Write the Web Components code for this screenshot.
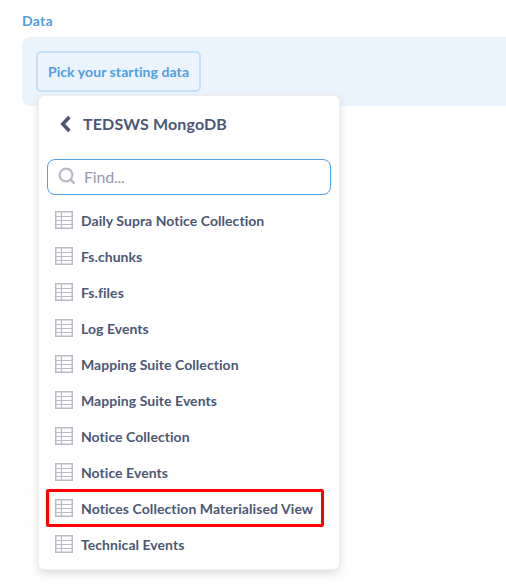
<!DOCTYPE html>
<html lang="en">
<head>
<meta charset="utf-8">
<title>Pick your starting data</title>
<style>
html, body { margin: 0; height: 100%; overflow: hidden; background: #fff; font-family: Lato, "Liberation Sans", sans-serif; font-variant-ligatures: none; color: #4c5773; }
</style>
</head>
<body>
<data-step label="Data">
  <pick-button>Pick your starting data</pick-button>
  <table-picker slot="popover" heading="TEDSWS MongoDB">
    <search-field slot="search" placeholder="Find..."></search-field>
    <table-item>Daily Supra Notice Collection</table-item>
    <table-item>Fs.chunks</table-item>
    <table-item>Fs.files</table-item>
    <table-item>Log Events</table-item>
    <table-item>Mapping Suite Collection</table-item>
    <table-item>Mapping Suite Events</table-item>
    <table-item>Notice Collection</table-item>
    <table-item>Notice Events</table-item>
    <table-item marked>Notices Collection Materialised View</table-item>
    <table-item>Technical Events</table-item>
  </table-picker>
</data-step>
<script>
function define(name, render) {
  customElements.define(name, class extends HTMLElement {
    constructor() {
      super();
      this.attachShadow({ mode: 'open' });
    }
    connectedCallback() {
      this.shadowRoot.innerHTML = '<style>*{box-sizing:border-box}</style>' + render(this);
    }
  });
}

define('data-step', el => `
  <style>
    :host { display: block; position: relative; padding: 12px 0 0 22px; }
    .label { font-size: 14px; line-height: 17px; font-weight: 700; color: #509ee3; margin-bottom: 8px; letter-spacing: .25px; }
    .panel { display: flex; height: 69px; padding: 14px; background: #ebf4fc; border-radius: 8px 0 0 8px; }
    .popover { position: absolute; left: 38px; top: 95px; }
  </style>
  <div class="label">${el.getAttribute('label')}</div>
  <div class="panel"><slot></slot></div>
  <div class="popover"><slot name="popover"></slot></div>`);

define('pick-button', () => `
  <style>
    :host { display: flex; align-items: center; justify-content: center; box-sizing: border-box; width: 165px; height: 41px;
      border: 2px solid #c4dff6; border-radius: 5px; color: #509ee3; font-size: 14px; line-height: 17px; font-weight: 700; white-space: nowrap; letter-spacing: .08px; }
  </style>
  <slot></slot>`);

define('table-picker', el => `
  <style>
    :host { display: block; box-sizing: border-box; width: 302px; height: 475px; background: #fff; border: 1px solid #eeecec;
      border-radius: 6px; box-shadow: 0 4px 10px rgba(0,0,0,.13); padding: 0 8px; }
    header { display: flex; align-items: center; height: 63px; padding: 0 0 7px 12px; gap: 12px; }
    header svg { display: block; width: 12px; height: 18px; }
    .title { font-size: 16px; line-height: 20px; font-weight: 700; letter-spacing: .14px; }
    .list { padding-top: 8px; }
  </style>
  <header>
    <svg viewBox="0 0 12 18"><path d="M10.4 2 3.8 9 10.4 16" fill="none" stroke="#4c5773" stroke-width="3.6"/></svg>
    <div class="title">${el.getAttribute('heading')}</div>
  </header>
  <slot name="search"></slot>
  <div class="list"><slot></slot></div>`);

define('search-field', el => `
  <style>
    :host { display: flex; align-items: center; box-sizing: border-box; width: 284px; height: 36px; padding-left: 10px; gap: 8px;
      border: 1px solid #509ee3; border-radius: 8px; font-size: 16px; line-height: 20px; color: #949aab; letter-spacing: -.2px; }
    svg { display: block; width: 18px; height: 18px; margin-top: -2px; }
  </style>
  <svg viewBox="0 0 18 18" fill="none" stroke="#b8bbc7" stroke-width="2.2"><circle cx="8" cy="8" r="6.4"/><path d="M12.4 12.4 16.6 16.6" stroke-width="2.4"/></svg>
  <span>${el.getAttribute('placeholder')}</span>`);

define('table-item', () => `
  <style>
    :host { display: flex; align-items: center; position: relative; height: 36px; padding-left: 8px; gap: 8px;
      font-size: 14px; line-height: 18px; font-weight: 700; white-space: nowrap; letter-spacing: .05px; }
    :host([marked]) { letter-spacing: .08px; }
    :host([marked])::after { content: ""; position: absolute; box-sizing: border-box; left: -1px; top: -2px; width: 278px; height: 38px;
      border: 3px solid #fe0000; border-radius: 2px; }
    svg { display: block; width: 18px; height: 18px; margin-top: -2px; }
    span { display: block; }
  </style>
  <svg viewBox="0 0 18 18" fill="none" stroke="#b8bbc7"><path d="M.75.75h16.5v16.5H.75z" stroke-width="1.5"/><path d="M1 5.5h16M1 9.5h16M1 13.5h16M6.5 1v16" stroke-width="1.2"/></svg>
  <span><slot></slot></span>`);
</script>
</body>
</html>
